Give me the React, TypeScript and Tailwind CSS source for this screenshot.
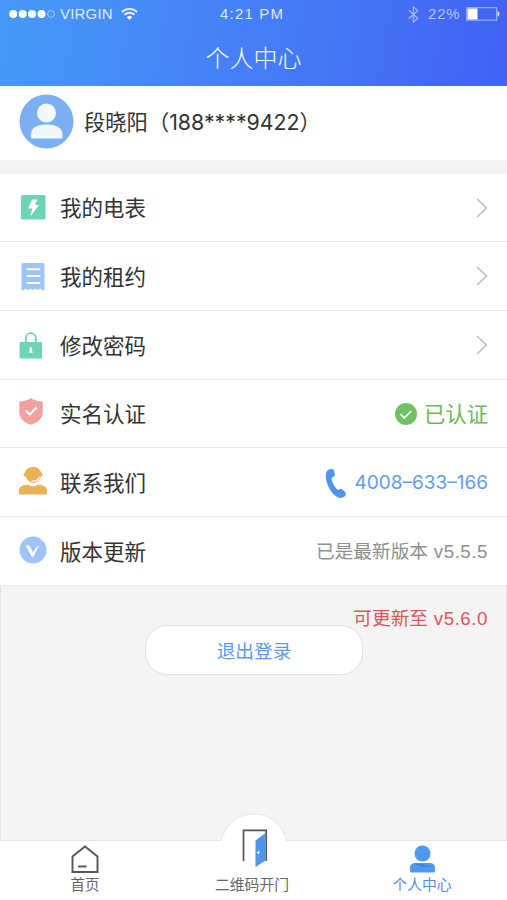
import type { ReactNode } from "react";

function StatusBar() {
  return (
    <div className="relative flex h-7 items-center justify-between pl-[9px] pr-[7px] text-[15px] text-[#dfeaff]">
      <div className="flex items-center">
        <svg width="47" height="10" viewBox="0 0 47 10">
          <circle cx="4.2" cy="5" r="4" fill="#fff" />
          <circle cx="13.7" cy="5" r="4" fill="#fff" />
          <circle cx="23" cy="5" r="4" fill="#fff" />
          <circle cx="32.5" cy="5" r="4" fill="#fff" />
          <circle cx="42" cy="5" r="3.4" fill="none" stroke="#a9cdfb" />
        </svg>
        <span className="ml-1 w-[53px] pt-px tracking-[0.2px]">VIRGIN</span>
        <svg className="ml-2" width="17" height="14" viewBox="0 0 17 14" fill="none" stroke="#eef5ff" strokeWidth="1.9">
          <path d="M1 5a10.6 10.6 0 0 1 15 0" />
          <path d="M3.6 7.8a7 7 0 0 1 9.8 0" />
          <path d="M8.5 13 5.7 10.2a4 4 0 0 1 5.6 0Z" fill="#eef5ff" stroke="none" />
        </svg>
      </div>
      <span className="absolute left-[220px] pt-px tracking-[1.2px] whitespace-nowrap">4:21 PM</span>
      <div className="flex items-center text-[#b6c8ff]">
        <svg width="11" height="17" viewBox="0 0 11 17" fill="none" stroke="#9db7ff" strokeWidth="1.3">
          <path d="m.8 4.3 9 8.2L5.4 16V1l4.4 3.5-9 8.2" />
        </svg>
        <span className="ml-[9px] w-[34px] pt-px tracking-[0.8px]">22%</span>
        <svg className="ml-[4px]" width="34" height="14" viewBox="0 0 34 14">
          <rect x=".7" y=".7" width="30" height="12.4" fill="none" stroke="#a9bcff" />
          <rect x="1.5" y="1.5" width="10" height="11" fill="#fff" />
          <path d="M31.5 4.3c2.6.6 2.6 4.6 0 5.2Z" fill="#dfe6ff" />
        </svg>
      </div>
    </div>
  );
}

function Chevron() {
  return (
    <svg width="12" height="20" viewBox="0 0 12 20" fill="none" stroke="#b9b9b9" strokeWidth="1.4">
      <path d="m1 1 9.5 9L1 19" />
    </svg>
  );
}

function MeterIcon() {
  return (
    <svg width="25" height="25" viewBox="0 0 25 25">
      <rect width="24.5" height="24.5" rx="1.5" fill="#6fd4b7" />
      <path d="M11.2 4.5h5.2l-2.3 5.6h4L9.3 21.5l2.2-8H7.2Z" fill="#fff" />
    </svg>
  );
}

function LeaseIcon() {
  return (
    <svg width="24" height="28" viewBox="0 0 24 28">
      <path
        d="M2 0h20a1.5 1.5 0 0 1 1.5 1.5V26a1.5 1.5 0 0 1-1.5 1.5c-1.3 0-1.4-1.7-2.8-1.7s-1.3 1.2-2.5 1.2-1.2-1.2-2.4-1.2-1.2 1.2-2.4 1.2-1.2-1.2-2.4-1.2S8.2 27 7 27s-1.2-1.2-2.4-1.2S3.4 27.5 2 27.5A1.5 1.5 0 0 1 .5 26V1.500A1.5 1.5 0 0 1 2 0Z"
        fill="#9fc4fb"
      />
      <path d="M6.5 6.300h12M6.5 13.100h12M6.5 20h12" stroke="#fff" strokeWidth="2" strokeLinecap="round" />
    </svg>
  );
}

function LockIcon() {
  return (
    <svg width="24" height="27" viewBox="0 0 24 27">
      <path d="M6.8 11V6.200a5 5 0 0 1 10 0V11" fill="none" stroke="#6fd4b7" strokeWidth="1.8" />
      <rect x=".5" y="10" width="22.5" height="16.5" rx="1" fill="#6fd4b7" />
      <path d="M10.200 15.500h2.800v4h.8v1.200H10v-1.200h.8v-3h-.6Z" fill="#fff" />
    </svg>
  );
}

function ShieldIcon() {
  return (
    <svg width="24" height="27" viewBox="0 0 24 27">
      <path d="M12 0c3 2.300 7 3.500 11.700 3.600V14c0 6.500-4.700 10.500-11.700 12.800C5 24.500.3 20.500.3 14V3.600C5 3.500 9 2.300 12 0Z" fill="#f4a0a1" />
      <path d="m6.800 12.700 4 3.800 6.700-7" fill="none" stroke="#fff" strokeWidth="2.2" />
    </svg>
  );
}

function SupportIcon() {
  return (
    <svg width="28" height="28" viewBox="0 0 28 28">
      <path d="M14 0C9 0 6.700 3 6 5.500L4.300 7.500l.9 1.800h1.500C7.800 12.500 10.500 16 14 16c4.500 0 7.200-3.500 8-7l1.500-.2V6L22 5.200C21 2 18.500 0 14 0Z" fill="#e8b257" />
      <path d="M20.300 10c-.8 2.500-2.600 3.900-5.800 4.200h-2" fill="none" stroke="#fff" strokeWidth="1.2" />
      <path d="M0 27.500v-4c0-3.500 2.800-5.500 9-6 1.500 1.400 3 1.800 5 1.800s3.500-.4 5-1.800c6.200.5 9 2.500 9 6v2.500a1.500 1.500 0 0 1-1.500 1.500Z" fill="#e8b257" />
    </svg>
  );
}

function VersionIcon() {
  return (
    <svg width="28" height="28" viewBox="0 0 28 28">
      <circle cx="14" cy="14" r="13.5" fill="#9fc4fb" />
      <path d="M6.600 9.500c3.200-.8 4.300 0 5.500 3l2 4.800c.9-3.500 2.700-6.300 6.800-7.800-2.800 2.200-4 6-6 11h-2.200Z" fill="#fff" />
    </svg>
  );
}

type Row = { label: string; height: string; iconBox: string; icon: ReactNode; right: ReactNode };

const rows: Row[] = [
  { label: "我的电表", height: "h-[68px]", iconBox: "pl-[21px]", icon: <MeterIcon />, right: <Chevron /> },
  { label: "我的租约", height: "h-[69px]", iconBox: "pl-[21px] pt-[2px]", icon: <LeaseIcon />, right: <Chevron /> },
  { label: "修改密码", height: "h-[69px]", iconBox: "pl-[19px]", icon: <LockIcon />, right: <Chevron /> },
  {
    label: "实名认证",
    height: "h-[68px]",
    iconBox: "pl-[19px] pb-[5px]",
    icon: <ShieldIcon />,
    right: (
      <span className="flex items-center gap-[7px] text-[21.3px] text-[#6cb65b]">
        <svg width="22" height="22" viewBox="0 0 22 22">
          <circle cx="11" cy="11" r="11" fill="#72c063" />
          <path d="m5.500 11.200 3.800 3.600 7-6.800" fill="none" stroke="#fff" strokeWidth="1.6" />
        </svg>
        <span className="pt-[4px]">已认证</span>
      </span>
    ),
  },
  {
    label: "联系我们",
    height: "h-[69px]",
    iconBox: "pl-[19px] pb-[3px]",
    icon: <SupportIcon />,
    right: (
      <span className="flex items-center gap-[7px] text-[#629de8]">
        <svg className="mt-[4px]" width="22" height="30" viewBox="0 0 22 30">
          <path d="M3.500.7C5.500-.2 8-.2 8.800 1.200c.9 1.700 1.300 4 .8 5.600-.5 1.400-2.600 1.200-3 2.700-.4 2.300 3.500 9.800 5.800 11 1.500.7 2.500-1 4-.6 1.800.6 3.700 2.600 4.300 4.300.6 2-1.400 3.600-3.200 4.300-3.500 1.400-7.500-1.200-10.500-5C3.500 19 .8 12.500.8 7.300.8 4 1.500 1.600 3.500.7Z" fill="#4f95ec" />
        </svg>
        <span className="pt-[3px] font-[Inter,'Liberation_Sans',sans-serif] text-[19px]">4008–633–166</span>
      </span>
    ),
  },
  {
    label: "版本更新",
    height: "h-[69px]",
    iconBox: "pl-[19px] pb-[3px]",
    icon: <VersionIcon />,
    right: (
      <span className="pt-[2px] text-[18.7px] text-[#8f8f8f]">
        已是最新版本<span className="tracking-[0.55px]"> v5.5.5</span>
      </span>
    ),
  },
];

function TabBar() {
  return (
    <nav className="relative flex h-[60px] justify-between border-t border-[#e6e6e6] bg-white text-[14.5px] leading-5 text-[#666]">
      <svg className="absolute left-[219px] -top-[28px]" width="70" height="34" viewBox="0 0 70 34">
        <path d="M0 28.500h2C7 10.500 19 1 35 1s28 9.500 33 27.500h2V34H0Z" fill="#fff" />
        <path d="M2 28C7 10.500 19 1 35 1s28 9.500 33 27" fill="none" stroke="#e6e6e6" />
      </svg>
      <div className="flex w-[170px] flex-col items-center pt-[4px]">
        <svg width="28" height="29" viewBox="0 0 28 29" fill="none" stroke="#555" strokeWidth="1.9">
          <path d="M1.500 11.500 14 1.500l12.500 10V27h-25Z" />
          <path d="M7 21.500h8.500" />
        </svg>
        <span className="mt-px">首页</span>
      </div>
      <div className="relative flex w-[164px] flex-col items-center pt-[34px]">
        <svg className="absolute -top-[13px] left-[70px]" width="26" height="40" viewBox="0 0 26 40">
          <path d="M1.500 33V2.300h22.700V33" fill="none" stroke="#555" strokeWidth="1.7" />
          <path d="m13.500 12.500 10-7.500v27.500l-10 6.500Z" fill="#4f95ec" />
          <path d="m14.800 24.500 2.400-2v4Z" fill="#fff" />
        </svg>
        <span className="mr-[3px] text-[14.8px]">二维码开门</span>
      </div>
      <div className="flex w-[170px] flex-col items-center pt-[4px] text-[#4f8fe0]">
        <svg width="27" height="29" viewBox="0 0 27 29">
          <circle cx="13.5" cy="8.5" r="8" fill="#5099f2" />
          <path d="M1 26v-3.500c0-3.300 2.500-4.500 6-4.500h13c3.500 0 6 1.200 6 4.500V26a1.500 1.500 0 0 1-1.500 1.500h-22A1.500 1.500 0 0 1 1 26Z" fill="#5099f2" />
          <path d="M5 18.500c5 .3 10 1 18 3-4 1-13 1-18-3Z" fill="#3f83df" />
        </svg>
        <span className="mt-px text-[14.8px]">个人中心</span>
      </div>
    </nav>
  );
}

export default function App() {
  return (
    <main className="flex h-[900px] w-[507px] flex-col overflow-hidden bg-white font-['Liberation_Sans','Noto_Sans_CJK_SC',sans-serif] text-[#333]">
      <header className="h-[86px] bg-[linear-gradient(100deg,#469af8_0%,#457ef7_50%,#4262f4_100%)]">
        <StatusBar />
        <h1 className="pt-[13px] text-center text-[24px] font-light leading-9 text-white">个人中心</h1>
      </header>

      <section className="flex h-[74px] items-center pl-[19px] pb-[3px]">
        <svg width="55" height="55" viewBox="0 0 55 55">
          <circle cx="27.5" cy="27.5" r="27" fill="#7ab0f2" />
          <circle cx="27.5" cy="19" r="9.5" fill="#f3f8ff" />
          <path d="M12 43v-2c0-7 5-10.500 15.500-10.500S43.500 34 43.500 41v2c0 1-.7 1.500-1.700 1.500H13.500C12.500 44.500 12 44 12 43Z" fill="#f3f8ff" />
        </svg>
        <p className="ml-[10px] pt-[2px] whitespace-nowrap font-[Inter,'Noto_Sans_CJK_SC',sans-serif] text-[21.3px]">段晓阳（188****9422）</p>
      </section>

      <div className="h-[14px] bg-[#f4f4f4]" />

      <ul>
        {rows.map((row) => (
          <li key={row.label} className={`flex items-center border-b border-[#e8e8e8] pr-[19px] ${row.height}`}>
            <div className={`w-[60px] shrink-0 ${row.iconBox}`}>{row.icon}</div>
            <span className="flex-1 pt-[4px] text-[21.5px]">{row.label}</span>
            {row.right}
          </li>
        ))}
      </ul>

      <section className="flex flex-1 flex-col border-x border-[#e3e3e3] bg-[#f4f4f4]">
        <p className="pr-[18px] pt-[19px] text-right text-[18.7px] leading-7 text-[#de5459]">
          可更新至<span className="tracking-[0.55px]"> v5.6.0</span>
        </p>
        <button className="relative -mt-[8px] ml-[144px] h-[50px] w-[218px] rounded-[22px] border border-[#e0e0e0] bg-white pt-[4px] text-[18.7px] text-[#5b9be6]">
          退出登录
        </button>
      </section>

      <TabBar />
    </main>
  );
}
